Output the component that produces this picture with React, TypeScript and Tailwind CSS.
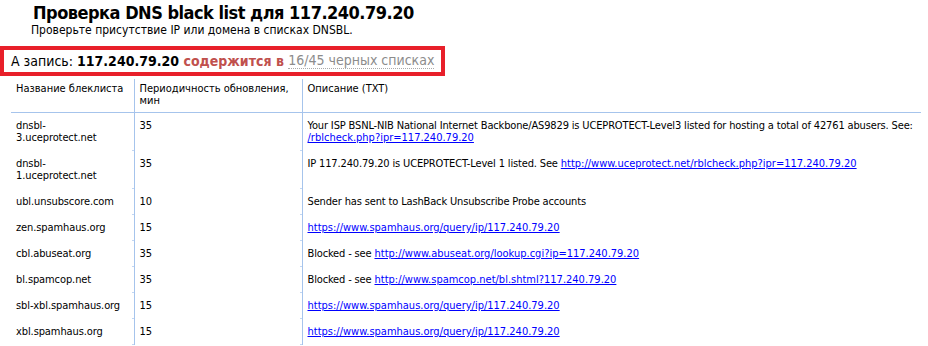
import React from 'react';

const rows = [
  {
    name: 'dnsbl-\n3.uceprotect.net',
    period: '35',
    text: 'Your ISP BSNL-NIB National Internet Backbone/AS9829 is UCEPROTECT-Level3 listed for hosting a total of 42761 abusers. See: ',
    link: '/rblcheck.php?ipr=117.240.79.20',
  },
  {
    name: 'dnsbl-\n1.uceprotect.net',
    period: '35',
    text: 'IP 117.240.79.20 is UCEPROTECT-Level 1 listed. See ',
    link: 'http://www.uceprotect.net/rblcheck.php?ipr=117.240.79.20',
  },
  { name: 'ubl.unsubscore.com', period: '10', text: 'Sender has sent to LashBack Unsubscribe Probe accounts', link: '' },
  { name: 'zen.spamhaus.org', period: '15', text: '', link: 'https://www.spamhaus.org/query/ip/117.240.79.20' },
  { name: 'cbl.abuseat.org', period: '35', text: 'Blocked - see ', link: 'http://www.abuseat.org/lookup.cgi?ip=117.240.79.20' },
  { name: 'bl.spamcop.net', period: '35', text: 'Blocked - see ', link: 'http://www.spamcop.net/bl.shtml?117.240.79.20' },
  { name: 'sbl-xbl.spamhaus.org', period: '15', text: '', link: 'https://www.spamhaus.org/query/ip/117.240.79.20' },
  { name: 'xbl.spamhaus.org', period: '15', text: '', link: 'https://www.spamhaus.org/query/ip/117.240.79.20' },
];

const Tick = () => (
  <span className="absolute -left-[3px] bottom-0 w-[2px] h-px bg-[#c2d6f2]" />
);

const App = () => {
  return (
    <div className="min-h-screen bg-white text-black font-['Tahoma','DejaVu_Sans_Condensed',sans-serif]">
      {/* Header */}
      <div className="pl-[33px] pt-[2px]">
        <h1 className="text-[18px] leading-[21px] font-bold tracking-[-0.5px]">Проверка DNS black list для 117.240.79.20</h1>
        <p className="text-[12px] leading-[14px] -ml-[2px]">Проверьте присутствие IP или домена в списках DNSBL.</p>
      </div>

      {/* Result box */}
      <div className="mt-[9px] w-[445px] h-[30px] border-4 border-[#e8202a] pl-[7px] flex items-center text-[14px] whitespace-nowrap">
        <span>А запись:&nbsp;</span>
        <b>117.240.79.20</b>
        <b className="text-[#c0504d]">&nbsp;содержится в&nbsp;</b>
        <span className="text-[#8c8c8c] border-b border-dotted border-[#aaa] leading-[15px]">16/45 черных списках</span>
      </div>

      {/* Table */}
      <table className="ml-[11px] mt-[3px] w-[910px] border-collapse text-[11px] leading-[12px] table-fixed">
        <colgroup>
          <col className="w-[123px]" />
          <col className="w-[168px]" />
          <col />
        </colgroup>
        <thead>
          <tr className="border-b border-[#a6c4ec] align-top">
            <th className="font-normal text-left pl-[5px] pt-[4px] pb-[5px]">Название блеклиста</th>
            <th className="font-normal text-left pl-[5px] pt-[4px] pb-[5px] border-l border-[#a6c4ec]">Периодичность обновления,<br />мин</th>
            <th className="font-normal text-left pl-[5px] pt-[4px] pb-[5px] border-l border-[#a6c4ec]">Описание (TXT)</th>
          </tr>
        </thead>
        <tbody>
          {rows.map((r, i) => (
            <tr key={i} className="align-top">
              <td className="pl-[5px] py-[7px] whitespace-pre-line tracking-[-0.1px]">{r.name}</td>
              <td className="relative pl-[5px] py-[7px] border-l border-[#a6c4ec]">
                {r.period}
                <Tick />
              </td>
              <td className="relative pl-[5px] pr-0 py-[7px] border-l border-[#a6c4ec]">
                <span className="tracking-[-0.15px]">{r.text}</span>
                {r.link && <a href="#" className="text-[#0000ff] underline">{r.link}</a>}
                <Tick />
              </td>
            </tr>
          ))}
        </tbody>
      </table>
    </div>
  );
};

export default App;
